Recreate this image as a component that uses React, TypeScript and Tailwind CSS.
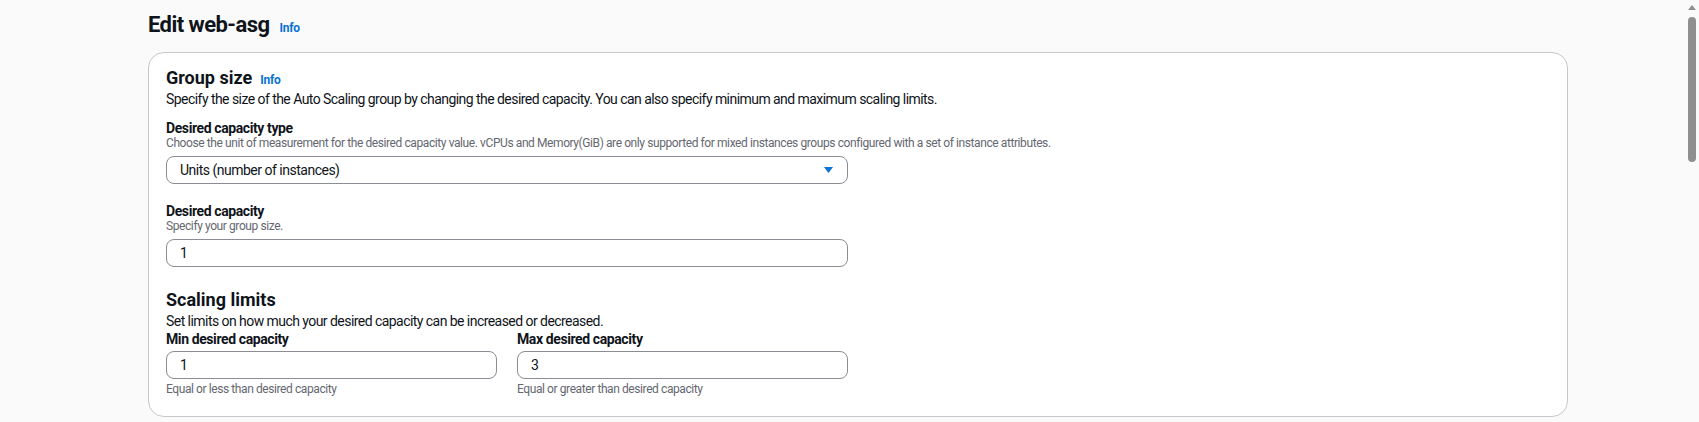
import React from 'react'

const Info = ({ className = '' }: { className?: string }) => (
    <span className={`text-[12px] font-bold text-[#0972d3] tracking-[-0.2px] ${className}`}>Info</span>
)

const Field = ({ label, hint, children }: { label: string; hint?: string; children: React.ReactNode }) => (
    <div className="flex flex-col">
        <span className="text-[14px] leading-[16px] font-bold tracking-[-0.4px] text-[#0f141a]">{label}</span>
        {hint && (
            <span className="whitespace-nowrap text-[12px] leading-[15px] tracking-[-0.41px] text-[#656871]">{hint}</span>
        )}
        <div className="mt-[5px]">{children}</div>
    </div>
)

const Box = ({ value, select }: { value: string; select?: boolean }) => (
    <div className="flex h-[28px] items-center justify-between rounded-lg border border-[#8c8c94] bg-white pl-[13px] pr-[13px] text-[14px] tracking-[-0.5px] text-[#0f141a]">
        <span>{value}</span>
        {select && (
            <svg width="9" height="6" viewBox="0 0 9 6" className="mr-[1px]">
                <path d="M0 0 H9 L4.5 6 Z" fill="#0972d3" />
            </svg>
        )}
    </div>
)

export default function App() {
    return (
        <div className="relative min-h-[422px] bg-[#fafafa] font-['Roboto',sans-serif] text-[#0f141a]">
            <div className="w-[1420px] ml-[148px] pt-[10px]">
                <div className="flex items-baseline gap-[10px]">
                    <h1 className="text-[22px] leading-[30px] font-bold tracking-[-0.55px]">Edit web-asg</h1>
                    <Info />
                </div>

                <div className="mt-[12px] rounded-2xl border border-[#c6c6cd] bg-white pt-[14px] pl-[17px] pb-[19px]">
                    <div className="w-[682px]">
                        <div className="flex items-baseline gap-[8px]">
                            <h2 className="text-[18px] leading-[22px] font-bold">Group size</h2>
                            <Info />
                        </div>
                        <p className="whitespace-nowrap text-[14px] leading-[20px] tracking-[-0.55px]">
                            Specify the size of the Auto Scaling group by changing the desired capacity. You can also specify minimum and maximum scaling limits.
                        </p>

                        <div className="mt-[11px]">
                            <Field
                                label="Desired capacity type"
                                hint="Choose the unit of measurement for the desired capacity value. vCPUs and Memory(GiB) are only supported for mixed instances groups configured with a set of instance attributes."
                            >
                                <Box value="Units (number of instances)" select />
                            </Field>
                        </div>

                        <div className="mt-[19px]">
                            <Field label="Desired capacity" hint="Specify your group size.">
                                <Box value="1" />
                            </Field>
                        </div>

                        <h2 className="mt-[22px] text-[18px] leading-[22px] font-bold">Scaling limits</h2>
                        <p className="whitespace-nowrap text-[14px] leading-[20px] tracking-[-0.55px]">
                            Set limits on how much your desired capacity can be increased or decreased.
                        </p>
                        <div className="grid grid-cols-2 gap-[20px]">
                            {[
                                { label: 'Min desired capacity', value: '1', hint: 'Equal or less than desired capacity' },
                                { label: 'Max desired capacity', value: '3', hint: 'Equal or greater than desired capacity' },
                            ].map((f) => (
                                <div key={f.label} className="flex flex-col">
                                    <span className="text-[14px] leading-[16px] font-bold tracking-[-0.4px]">{f.label}</span>
                                    <div className="mt-[4px]">
                                        <Box value={f.value} />
                                    </div>
                                    <span className="mt-[3px] text-[12px] leading-[15px] tracking-[-0.41px] text-[#656871]">{f.hint}</span>
                                </div>
                            ))}
                        </div>
                    </div>
                </div>
            </div>

            {/* browser scrollbar */}
            <div className="absolute right-0 top-0 flex h-[422px] w-[15px] flex-col items-center">
                <svg width="8" height="6" viewBox="0 0 8 6" className="mt-[4px]">
                    <path d="M0 6 L4 1 L8 6 Z" fill="#8f8f8f" />
                </svg>
                <div className="mt-[7px] h-[145px] w-[8px] rounded-full bg-[#8f8f8f]" />
            </div>
        </div>
    )
}
